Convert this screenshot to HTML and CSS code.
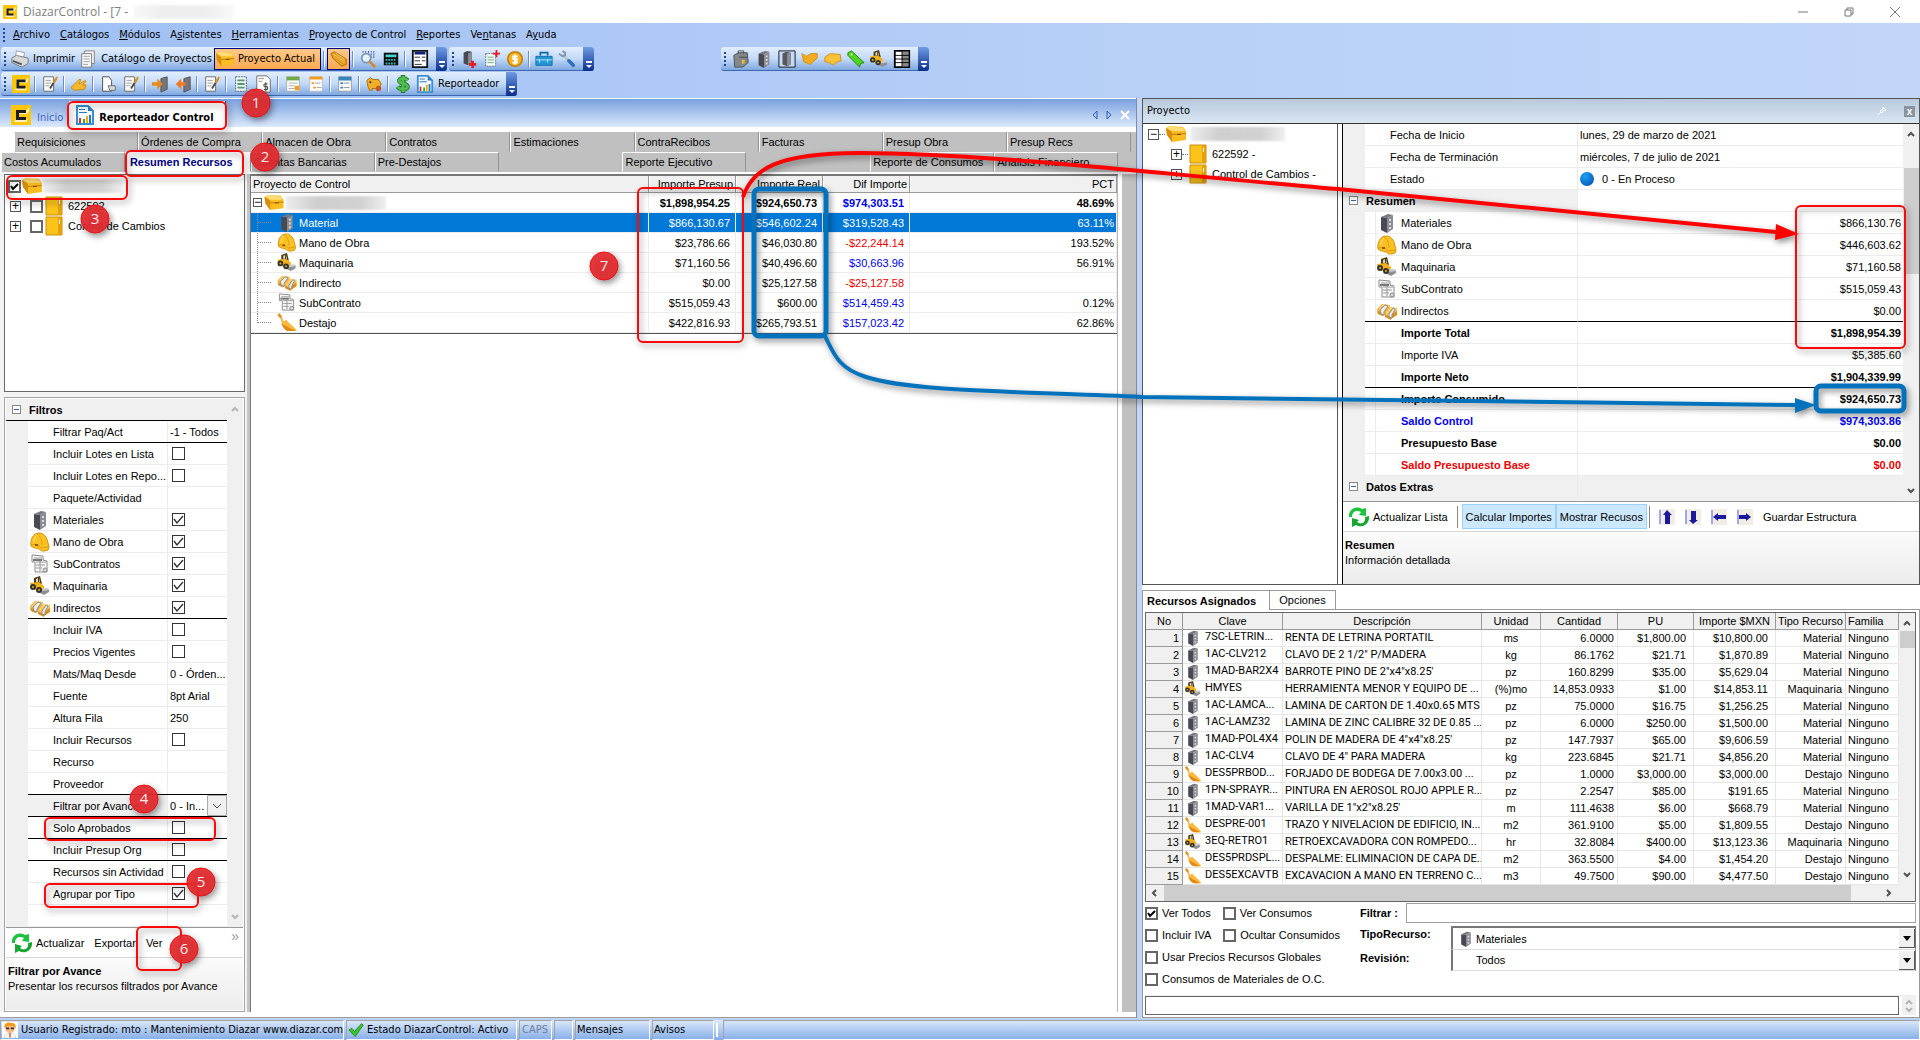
FILE: index.html
```html
<!DOCTYPE html>
<html lang="es">
<head>
<meta charset="utf-8">
<title>DiazarControl</title>
<link rel="stylesheet" href="styles.css">
</head>
<body>
<svg class="sprite" aria-hidden="true">
<symbol id="logo" viewBox="0 0 20 20"><path fill="#ffc70a" d="M0 0h20v20H0z"/><path fill="#fff" d="M5 5h11l2-3v4l-2 3H5zM5 14h11v3H3z" opacity=".75"/><path fill="#1d1d1b" d="M5 5h10v3H8v4h7v3H5z"/></symbol>
<symbol id="block" viewBox="0 0 20 20"><path fill="#77787f" d="M4 4l7-3 5 1-6 3z"/><path fill="#484952" d="M4 4l6 1v15l-6-3z"/><path fill="#8b8d95" d="M10 5l6-3v14l-6 4z"/><path stroke="#dcdde2" stroke-width="2" d="M13 6v2M13 10v2M13 14v2"/></symbol>
<symbol id="helmet" viewBox="0 0 20 20"><path fill="#fbc123" stroke="#d1920c" d="M1 14C0 8 3 1 9 1c5 0 8 4 9 10l1 4-1 3c-5 2-7 1-9-1-3-1-6-1-8-3z"/><path fill="none" stroke="#e2a013" d="M7 2c4 3 5 7 5 11"/><path fill="none" stroke="#ffe080" d="M4 10c0-3 1-5 3-7"/><path fill="none" stroke="#dd9a10" d="M1 13c4-1 8 0 10 3l7-1"/><path fill="#8f5b05" d="M5 12h3v2H5z"/></symbol>
<symbol id="loader" viewBox="0 0 20 20"><path fill="#4a3b14" d="M4 7V2l6-2 2 8z"/><path fill="#dcd6c2" d="M6 3l2-1v4H6zM9 2l1 4H9z"/><path fill="#f2b01a" d="M0 7l9-1 5 4v4l-4 2-9-4z"/><path fill="#8e9096" d="M12 14l7-1v3l-5 3-4-2z"/><path fill="#c9cbd0" d="M13 12h5l1 2-7 1z"/><circle cx="3" cy="11" r="3" fill="#333"/><circle cx="9" cy="14" r="3" fill="#333"/><circle cx="3" cy="11" r="1" fill="#f2b01a"/><circle cx="9" cy="14" r="1" fill="#f2b01a"/></symbol>
<symbol id="docs" viewBox="0 0 20 20"><path fill="#f8f8f8" stroke="#8b8b8b" d="M2 1l11 1v4l4 1v11H5V8H2z"/><path stroke="#9a9a9a" d="M4 4h8M6 8h10M6 11h9M6 14h6M10 6v11"/><path stroke="#777" stroke-width="2" d="M3 6h9"/><circle cx="15" cy="16" r="2" fill="#ddd" stroke="#888"/></symbol>
<symbol id="money" viewBox="0 0 20 20"><path fill="#f5b53a" d="M0 8l5-5 8 1-1 7-6 4-5-2z"/><path fill="#d98f17" d="M0 10l6 2v3l-5-2zM8 13l6 3v3l-6-3z"/><path fill="#f9bf47" d="M8 12l5-6 7 1v6l-6 4z"/><path fill="#d98f17" d="M14 14l6-4v4l-6 4z"/><path stroke="#ffe3a1" d="M2 8l4-4 6 1M10 12l4-5 5 1" fill="none"/><path fill="#ececec" stroke="#8c8c8c" d="M3 9l5-5 3 1-4 6v3l-3-1zM12 13l4-6 2 1-3 6v3l-3-1z"/></symbol>
<symbol id="trowel" viewBox="0 0 20 20"><path fill="none" stroke="#e0962a" stroke-width="3" d="M1 1l3 4"/><path fill="none" stroke="#f3b34c" stroke-width="2" d="M4 5l1 4 3 1"/><path fill="#ffb938" d="M4 11l5-4c3 4 7 6 11 11v1h-8c-4 0-6-4-8-8z"/><path fill="#e08a18" d="M4 11l15 8h-7c-4 0-6-4-8-8z"/></symbol>
<symbol id="box" viewBox="0 0 20 20"><path fill="#f9bd22" d="M0 4l4-2 13 1 3 4v9l-14 2-5-7z"/><path fill="#ffdc78" d="M1 4l4-2 12 2 2 3H6z"/><path fill="#d68e0c" d="M0 4l6 4v10l-5-7z"/><path fill="#c07c08" d="M6 10l14-1v1L6 11z"/><path fill="#7c4f03" d="M11 10h4v1h-4z"/></symbol>
<symbol id="door" viewBox="0 0 18 20"><path fill="#fcc41a" stroke="#c98e0b" d="M1 1h16v18H1z"/><path fill="#e4a10c" d="M13 1h4v18h-4z"/><path fill="#fff" d="M14 4h1v4h-1z"/></symbol>
<symbol id="refresh" viewBox="0 0 20 20"><path fill="#1fc23f" d="M0 10C-1 3 6-2 13 2l4-1v8l-7-1 2-3C8 3 3 4 3 10z"/><path fill="#16a733" d="M20 9c1 7-6 13-13 9l-4 2v-9l7 2-2 2c4 3 9 1 8-5z"/></symbol>
<symbol id="report" viewBox="0 0 20 20"><path fill="#f4faff" stroke="#3a8fd0" stroke-width="2" d="M2 1h11l5 5v13H2z"/><path fill="#2e7bc4" d="M13 1l5 5h-5zM4 4h6v1H4zM4 7h8v1H4z"/><path fill="#d33" d="M4 13h2v5H4z"/><path fill="#3a3" d="M8 14h2v4H8z"/><path fill="#fa0" d="M11 11h2v7h-2z"/><path fill="#27c" d="M14 10h2v8h-2z"/></symbol>
<symbol id="printer" viewBox="0 0 20 20"><path fill="#fff" stroke="#999" d="M6 1l9 2-1 6-9-2z"/><path fill="#d9d9d9" stroke="#777" d="M1 9l5-3 13 3v6l-7 4-11-5z"/><path stroke="#555" stroke-width="2" d="M2 12l10 4"/></symbol>
<symbol id="page" viewBox="0 0 20 20"><path fill="#fafafa" stroke="#777" d="M6 1h11v14H6z"/><path fill="#fafafa" stroke="#777" d="M3 4h11v15H3z"/><path stroke="#8e9aa8" stroke-width="1" d="M5 7h7M5 10h7M5 13h7M5 16h5"/></symbol>
<symbol id="pagepen" viewBox="0 0 20 20"><path fill="#fafafa" stroke="#666" d="M3 2h11v16H3z"/><path stroke="#999" d="M5 6h6M5 9h6M5 12h4"/><path stroke="#444" stroke-width="2" d="M17 4l-7 11"/><path stroke="#e59a17" stroke-width="2" d="M18 2l-4 7"/></symbol>
<symbol id="pageout" viewBox="0 0 20 20"><path fill="#fff" stroke="#444" d="M4 2h7l3 4v12H4z"/><path fill="#ddd" stroke="#666" d="M10 12h8v5h-6z"/></symbol>
<symbol id="pagegreen" viewBox="0 0 20 20"><path fill="#eafaf0" stroke="#557" stroke-dasharray="2 1" d="M4 2h12v16H4z"/><path stroke="#5a8f78" stroke-width="2" d="M6 6h8M6 10h8M6 14h8"/></symbol>
<symbol id="pagedollar" viewBox="0 0 20 20"><path fill="#fff" stroke="#666" d="M2 1h11l4 4v14H2z"/><path stroke="#888" d="M4 4h6M4 7h4"/><path fill="none" stroke="#333" d="M14 10h-4v3h4v3h-4M12 8v10"/></symbol>
<symbol id="listg" viewBox="0 0 20 20"><path fill="#fff" stroke="#aaa" d="M3 2h14v16H3z"/><path fill="#6eaa43" d="M3 2h14v4H3z"/><path stroke="#aaa" d="M5 9h10M5 12h7M5 15h7"/><path fill="#f0a018" d="M12 12h5v5h-5z"/></symbol>
<symbol id="listo" viewBox="0 0 20 20"><path fill="#fff" stroke="#bbb" d="M3 2h14v16H3z"/><path fill="#f39b1d" d="M3 2h14v3H3zM5 8h3v2H5zM7 13h3v2H7z"/><path stroke="#999" d="M9 9h6M11 14h5"/></symbol>
<symbol id="listb" viewBox="0 0 20 20"><path fill="#fff" stroke="#999" d="M3 2h14v16H3z"/><path fill="#3684ba" d="M3 2h14v4H3zM5 8h3v2H5zM5 13h3v2H5z"/><path stroke="#888" d="M9 9h6M9 14h6"/></symbol>
<symbol id="hand" viewBox="0 0 20 20"><path fill="#f5b82e" stroke="#c78510" d="M1 14l4-4 5-5 2 0-2 5 7-4 1 1-4 4 4 0-2 5-11 1z"/></symbol>
<symbol id="blockin" viewBox="0 0 20 20"><path fill="#74757d" stroke="#555" d="M11 4l7-2v14l-7 3z"/><path fill="#e98a1c" d="M1 8h6V4l6 6-6 6v-4H1z"/></symbol>
<symbol id="blockout" viewBox="0 0 20 20"><path fill="#74757d" stroke="#555" d="M11 4l7-2v14l-7 3z"/><path fill="#ee7b22" d="M13 8H8V4l-6 6 6 6v-4h5z"/></symbol>
<symbol id="pig" viewBox="0 0 20 20"><path fill="#f0ad25" stroke="#a96e08" d="M2 6l4-3 3 2h6l3 5-2 4v3h-3l-1-2H8v2H5l-2-5z"/><circle cx="15" cy="15" r="3" fill="#c75428"/><path fill="#333" d="M5 7h2v2H5z"/></symbol>
<symbol id="dollar" viewBox="0 0 20 20"><path fill="none" stroke="#237b2a" stroke-width="5" d="M15 6C13 3 5 3 6 7c1 3 9 2 9 6 0 3-8 4-11 0M10 0v20"/><path fill="none" stroke="#52bd51" stroke-width="3" d="M15 6C13 3 5 3 6 7c1 3 9 2 9 6 0 3-8 4-11 0M10 1v18"/></symbol>
<symbol id="search" viewBox="0 0 20 20"><path stroke="#3344aa" stroke-width="2" stroke-dasharray="1 2" d="M4 2h14M7 5h11M10 8h9"/><circle cx="8" cy="9" r="5" fill="#e2f1fb" stroke="#7e99ae" stroke-width="2"/><path stroke="#d7872d" stroke-width="3" d="M12 13l6 6"/></symbol>
<symbol id="calc" viewBox="0 0 20 20"><path fill="#0a0a0a" d="M2 3h16v14H2z"/><path fill="#3ed4cf" d="M4 5h12v3H4z"/><path stroke="#2bbab5" stroke-width="2" stroke-dasharray="2 1" d="M4 11h12M4 15h12"/></symbol>
<symbol id="form" viewBox="0 0 20 20"><path fill="#fff" stroke="#111" stroke-width="2" d="M2 1h16v18H2z"/><path fill="#11207a" d="M4 2h12v3H4z"/><path stroke="#222" stroke-width="1" d="M4 8h6M12 8h4M4 12h6M12 12h4M4 16h8"/></symbol>
<symbol id="blockplus" viewBox="0 0 20 20"><path fill="#484952" d="M4 3l4-2 5 1v13l-4 2-5-2z"/><path fill="#8b8d95" d="M9 4l4-2v13l-4 2z"/><path stroke="#e51b23" stroke-width="3" d="M14 12v8M10 16h8"/></symbol>
<symbol id="listplus" viewBox="0 0 20 20"><path fill="#effcf3" stroke="#668" stroke-dasharray="2 1" d="M3 4h11v14H3z"/><path stroke="#6b9a83" d="M5 8h7M5 11h7M5 14h7"/><path stroke="#e51b23" stroke-width="2" d="M15 0v8M11 4h8"/></symbol>
<symbol id="coin" viewBox="0 0 20 20"><circle cx="10" cy="10" r="8" fill="#f7b421" stroke="#c8830d" stroke-width="2"/><path fill="none" stroke="#fff" stroke-width="2" d="M13 7H8v3h4v4H7M10 5v11"/></symbol>
<symbol id="case" viewBox="0 0 20 20"><path fill="#2498d5" stroke="#0b6aa5" d="M1 7h18v10H1z"/><path fill="none" stroke="#0b6aa5" stroke-width="2" d="M6 6V3h8v3"/><path stroke="#bde7fb" d="M1 11h18M5 10v4M14 10v4"/></symbol>
<symbol id="wrench" viewBox="0 0 20 20"><path stroke="#b9c8d8" stroke-width="3" d="M5 5l6 6"/><path fill="none" stroke="#8093a8" stroke-width="2" d="M1 4l4 3 3-1V3L5 1"/><path stroke="#2f6fc2" stroke-width="4" stroke-linecap="round" d="M12 12l5 5"/></symbol>
<symbol id="bag" viewBox="0 0 20 20"><path fill="#85888a" stroke="#4c4e50" d="M2 6l5-3h10l1 11-6 5H3z"/><path fill="none" stroke="#444" d="M7 4V1h6v3M8 8h9"/><path fill="#f4bd26" d="M11 11h3v4h-3z"/></symbol>
<symbol id="blockbox" viewBox="0 0 20 20"><path fill="#c3d9f7" stroke="#111" stroke-width="1" d="M1 1h18v18H1z"/><path fill="#55565e" d="M5 4l4-2 5 1v13l-4 2-5-2z"/><path fill="#898b93" d="M10 4l4-1v13l-4 2z"/></symbol>
<symbol id="shake" viewBox="0 0 20 20"><path fill="#f3ac20" stroke="#d48b10" d="M1 4l5 3 5-3 7 0v5l-8 7-7-3z"/></symbol>
<symbol id="stack" viewBox="0 0 20 20"><path fill="#fbc239" stroke="#d28c0d" d="M1 8l6-4 11 1 1 7-6 2-3 3-4-3-5-1z"/></symbol>
<symbol id="bars" viewBox="0 0 20 20"><path fill="#e6a023" stroke="#a8690b" d="M1 4l4-2 13 8 0 6-5 2L3 9z"/><path stroke="#ffd680" d="M4 5l12 8M7 4l9 6" stroke-dasharray="3 1"/></symbol>
<symbol id="tag" viewBox="0 0 20 20"><path fill="#4fd51f" stroke="#1f7f0d" d="M1 3l4-2 14 13-4 1-1 4L1 6z"/><circle cx="5" cy="5" r="1" fill="#fff"/></symbol>
<symbol id="tbl" viewBox="0 0 20 20"><path fill="#fff" stroke="#000" stroke-width="2" d="M2 1h16v18H2z"/><path fill="#888" d="M10 2h7v16h-7z"/><path stroke="#000" d="M2 6h16M2 10h16M2 14h16M10 1v18"/></symbol>
<symbol id="user" viewBox="0 0 20 20"><path fill="#fff" d="M0 0h20v20H0z"/><circle cx="10" cy="8" r="6" fill="#f8b98a"/><path fill="#f59a16" d="M3 8C2 1 8 0 10 1c6-1 8 3 7 7l-3-3H6z"/><path fill="#333" d="M5 7h4v2H5zM11 7h4v2h-4z"/><path fill="#fff" stroke="#ccc" d="M3 20c0-8 14-8 14 0z"/><path fill="#e65c12" d="M9 14h2v5H9z"/></symbol>
<symbol id="check" viewBox="0 0 20 20"><path fill="#3cc42c" stroke="#18820f" d="M1 10l4-2 3 4L17 2l2 2L9 18z"/></symbol>
<symbol id="au" viewBox="0 0 16 16"><path fill="#f1ede5" d="M0 0h16v16H0z"/><path stroke="#5560f0" d="M1 1v14"/><path fill="#1b189c" d="M8 1l5 5h-2v9H6V6H4z"/></symbol>
<symbol id="ad" viewBox="0 0 16 16"><path fill="#f1ede5" d="M0 0h16v16H0z"/><path stroke="#5560f0" d="M1 1v14"/><path fill="#1b189c" d="M8 15l5-4h-2V2H6v9H4z"/></symbol>
<symbol id="al" viewBox="0 0 16 16"><path fill="#f1ede5" d="M0 0h16v16H0z"/><path stroke="#5560f0" d="M1 1v14"/><path fill="#1b189c" d="M2 8l5-4v2h8v4H7v2z"/></symbol>
<symbol id="ar" viewBox="0 0 16 16"><path fill="#f1ede5" d="M0 0h16v16H0z"/><path stroke="#5560f0" d="M1 1v14"/><path fill="#1b189c" d="M14 8l-5-4v2H2v4h7v2z"/></symbol>
<symbol id="up" viewBox="0 0 8 8"><path fill="none" stroke="currentColor" stroke-width="2" d="M1 6l3-3 3 3"/></symbol>
<symbol id="dn" viewBox="0 0 8 8"><path fill="none" stroke="currentColor" stroke-width="2" d="M1 2l3 3 3-3"/></symbol>
<symbol id="lt" viewBox="0 0 8 8"><path fill="none" stroke="currentColor" stroke-width="2" d="M6 1L3 4l3 3"/></symbol>
<symbol id="rt" viewBox="0 0 8 8"><path fill="none" stroke="currentColor" stroke-width="2" d="M2 1l3 3-3 3"/></symbol>
<symbol id="cap" viewBox="0 0 8 8"><path stroke="#fff" stroke-width="2" d="M1 1h6"/><path fill="#fff" d="M1 4h6L4 7z"/></symbol>
</svg>

<header class="titlebar">
  <svg class="i14"><use href="#logo"/></svg>
  <span>DiazarControl - [7 -</span><span class="smudge title-smudge"></span>
  <span class="winbtns"><button aria-label="Minimizar"><svg viewBox="0 0 10 10"><path d="M0 5h10"/></svg></button><button aria-label="Restaurar"><svg viewBox="0 0 10 10"><path d="M1 3h6v6H1zM3 3V1h6v6H7"/></svg></button><button aria-label="Cerrar"><svg viewBox="0 0 10 10"><path d="M0 0l10 10M10 0L0 10"/></svg></button></span>
</header>

<div class="bars">
  <nav class="menu"><i class="grip"></i><button><u>A</u>rchivo</button><button><u>C</u>atálogos</button><button><u>M</u>ódulos</button><button>A<u>s</u>istentes</button><button><u>H</u>erramientas</button><button><u>P</u>royecto de Control</button><button><u>R</u>eportes</button><button>Ve<u>n</u>tanas</button><button>A<u>y</u>uda</button></nav>
  <div class="tbrow">
    <div class="tb"><i class="grip"></i><button><svg><use href="#printer"/></svg>Imprimir</button><button><svg><use href="#page"/></svg>Catálogo de Proyectos</button><button class="on"><svg><use href="#box"/></svg>Proyecto Actual</button><i class="sep"></i><button class="on" aria-label="Recursos"><svg><use href="#bars"/></svg></button><i class="sep"></i><button aria-label="Buscar"><svg><use href="#search"/></svg></button><button aria-label="Calculadora"><svg><use href="#calc"/></svg></button><i class="sep"></i><button aria-label="Formulario"><svg><use href="#form"/></svg></button><i class="cap"><svg><use href="#cap"/></svg></i></div>
    <div class="tb"><i class="grip"></i><button aria-label="Agregar material"><svg><use href="#blockplus"/></svg></button><button aria-label="Agregar lista"><svg><use href="#listplus"/></svg></button><button aria-label="Moneda"><svg><use href="#coin"/></svg></button><i class="sep"></i><button aria-label="Maletín"><svg><use href="#case"/></svg></button><button aria-label="Opciones"><svg><use href="#wrench"/></svg></button><i class="cap"><svg><use href="#cap"/></svg></i></div>
    <div class="tb third"><i class="grip"></i><button aria-label="Portafolio"><svg><use href="#bag"/></svg></button><button aria-label="Material"><svg><use href="#block"/></svg></button><button aria-label="Material marcado"><svg><use href="#blockbox"/></svg></button><button aria-label="Acuerdos"><svg><use href="#shake"/></svg></button><button aria-label="Costos"><svg><use href="#stack"/></svg></button><button aria-label="Etiqueta"><svg><use href="#tag"/></svg></button><button aria-label="Maquinaria"><svg><use href="#loader"/></svg></button><button aria-label="Tabla"><svg><use href="#tbl"/></svg></button><i class="cap"><svg><use href="#cap"/></svg></i></div>
  </div>
  <div class="tbrow">
    <div class="tb"><i class="grip"></i><button aria-label="Inicio"><svg><use href="#logo"/></svg></button><i class="sep"></i><button aria-label="Editar"><svg><use href="#pagepen"/></svg></button><i class="sep"></i><button aria-label="Mano"><svg><use href="#hand"/></svg></button><i class="sep"></i><button aria-label="Requisición"><svg><use href="#pageout"/></svg></button><button aria-label="Orden"><svg><use href="#pagepen"/></svg></button><i class="sep"></i><button aria-label="Entrada"><svg><use href="#blockin"/></svg></button><button aria-label="Salida"><svg><use href="#blockout"/></svg></button><i class="sep"></i><button aria-label="Contrato"><svg><use href="#pagepen"/></svg></button><i class="sep"></i><button aria-label="Estimación"><svg><use href="#pagegreen"/></svg></button><button aria-label="Factura"><svg><use href="#pagedollar"/></svg></button><i class="sep"></i><button aria-label="Lista verde"><svg><use href="#listg"/></svg></button><button aria-label="Lista naranja"><svg><use href="#listo"/></svg></button><i class="sep"></i><button aria-label="Lista azul"><svg><use href="#listb"/></svg></button><i class="sep"></i><button aria-label="Ahorro"><svg><use href="#pig"/></svg></button><i class="sep"></i><button aria-label="Pagos"><svg><use href="#dollar"/></svg></button><button><svg><use href="#report"/></svg>Reporteador</button><i class="cap"><svg><use href="#cap"/></svg></i></div>
  </div>
</div>

<main class="work">
  <section class="doc">
    <div class="doctabs"><svg class="i20"><use href="#logo"/></svg><button>Inicio</button><button class="cur"><svg class="i20"><use href="#report"/></svg>Reporteador Control</button><span class="docnav"><svg viewBox="0 0 6 10"><path d="M5 1v8L1 5z"/></svg><svg viewBox="0 0 6 10"><path d="M1 1v8l4-4z"/></svg><svg class="x" viewBox="0 0 10 10"><path d="M1 1l8 8M9 1L1 9"/></svg></span></div>
    <div class="tabs t1"><button>Requisiciones</button><button>Órdenes de Compra</button><button>Almacen de Obra</button><button>Contratos</button><button>Estimaciones</button><button>ContraRecibos</button><button>Facturas</button><button>Presup Obra</button><button>Presup Recs</button></div>
    <div class="tabs t2"><button>Costos Acumulados</button><button class="cur">Resumen Recursos</button><button>Cuentas Bancarias</button><button>Pre-Destajos</button><i></i><button>Reporte Ejecutivo</button><i></i><button>Reporte de Consumos</button><button>Analisis Financiero</button></div>
    <div class="docbody">
      <aside class="side">
        <div class="tree">
          <label><input type="checkbox" class="classic" checked><svg class="i20"><use href="#box"/></svg><span class="smudge s80"></span></label>
          <div class="node"><b class="pm">+</b><label><input type="checkbox" class="classic"><svg class="door"><use href="#door"/></svg>622592</label></div>
          <div class="node"><b class="pm">+</b><label><input type="checkbox" class="classic"><svg class="door"><use href="#door"/></svg>Control de Cambios</label></div>
        </div>
        <div class="filters">
          <div class="pgwrap">
            <div class="pg">
              <h2><b class="mn"></b>Filtros</h2>
              <div class="r k"><span></span><em>Filtrar Paq/Act</em><p>-1 - Todos</p></div>
              <label class="r"><span></span><em>Incluir Lotes en Lista</em><p><input type="checkbox"></p></label>
              <label class="r"><span></span><em>Incluir Lotes en Repo...</em><p><input type="checkbox"></p></label>
              <div class="r"><span></span><em>Paquete/Actividad</em><p></p></div>
              <label class="r"><span><svg><use href="#block"/></svg></span><em>Materiales</em><p><input type="checkbox" checked></p></label>
              <label class="r"><span><svg><use href="#helmet"/></svg></span><em>Mano de Obra</em><p><input type="checkbox" checked></p></label>
              <label class="r"><span><svg><use href="#docs"/></svg></span><em>SubContratos</em><p><input type="checkbox" checked></p></label>
              <label class="r"><span><svg><use href="#loader"/></svg></span><em>Maquinaria</em><p><input type="checkbox" checked></p></label>
              <label class="r k"><span><svg><use href="#money"/></svg></span><em>Indirectos</em><p><input type="checkbox" checked></p></label>
              <label class="r"><span></span><em>Incluir IVA</em><p><input type="checkbox"></p></label>
              <label class="r"><span></span><em>Precios Vigentes</em><p><input type="checkbox"></p></label>
              <div class="r"><span></span><em>Mats/Maq Desde</em><p>0 - Órden...</p></div>
              <div class="r"><span></span><em>Fuente</em><p>8pt Arial</p></div>
              <div class="r"><span></span><em>Altura Fila</em><p>250</p></div>
              <label class="r"><span></span><em>Incluir Recursos</em><p><input type="checkbox"></p></label>
              <div class="r"><span></span><em>Recurso</em><p></p></div>
              <div class="r k"><span></span><em>Proveedor</em><p></p></div>
              <label class="r k sel"><span></span><em>Filtrar por Avance</em><p><select><option>0 - In...</option></select></p></label>
              <label class="r k"><span></span><em>Solo Aprobados</em><p><input type="checkbox"></p></label>
              <label class="r k"><span></span><em>Incluir Presup Org</em><p><input type="checkbox"></p></label>
              <label class="r"><span></span><em>Recursos sin Actividad</em><p><input type="checkbox"></p></label>
              <label class="r"><span></span><em>Agrupar por Tipo</em><p><input type="checkbox" checked></p></label>
              <div class="r"><span></span><em></em><p></p></div>
            </div>
            <div class="vs dim"><svg><use href="#up"/></svg><svg><use href="#dn"/></svg></div>
          </div>
          <div class="pgtools"><button><svg class="i20"><use href="#refresh"/></svg>Actualizar</button><button>Exportar</button><button>Ver</button><i class="more">»</i></div>
          <div class="desc"><b>Filtrar por Avance</b>Presentar los recursos filtrados por Avance</div>
        </div>
      </aside>
      <div class="sheet">
        <table class="res">
          <colgroup><col><col class="c87"><col class="c87"><col class="c87"><col class="c207"></colgroup>
          <thead><tr><th>Proyecto de Control</th><th>Importe Presup</th><th>Importe Real</th><th>Dif Importe</th><th>PCT</th></tr></thead>
          <tbody>
            <tr class="tot"><td><div class="cell"><b class="pm sm">−</b><svg class="i20"><use href="#box"/></svg><span class="smudge s100"></span></div></td><td>$1,898,954.25</td><td>$924,650.73</td><td class="blue">$974,303.51</td><td>48.69%</td></tr>
            <tr class="hl"><td><div class="cell"><i class="cn"></i><svg class="i20"><use href="#block"/></svg>Material</div></td><td>$866,130.67</td><td>$546,602.24</td><td>$319,528.43</td><td>63.11%</td></tr>
            <tr><td><div class="cell"><i class="cn"></i><svg class="i20"><use href="#helmet"/></svg>Mano de Obra</div></td><td>$23,786.66</td><td>$46,030.80</td><td class="red">-$22,244.14</td><td>193.52%</td></tr>
            <tr><td><div class="cell"><i class="cn"></i><svg class="i20"><use href="#loader"/></svg>Maquinaria</div></td><td>$71,160.56</td><td>$40,496.60</td><td class="blue">$30,663.96</td><td>56.91%</td></tr>
            <tr><td><div class="cell"><i class="cn"></i><svg class="i20"><use href="#money"/></svg>Indirecto</div></td><td>$0.00</td><td>$25,127.58</td><td class="red">-$25,127.58</td><td></td></tr>
            <tr><td><div class="cell"><i class="cn"></i><svg class="i20"><use href="#docs"/></svg>SubContrato</div></td><td>$515,059.43</td><td>$600.00</td><td class="blue">$514,459.43</td><td>0.12%</td></tr>
            <tr><td><div class="cell"><i class="cn last"></i><svg class="i20"><use href="#trowel"/></svg>Destajo</div></td><td>$422,816.93</td><td>$265,793.51</td><td class="blue">$157,023.42</td><td>62.86%</td></tr>
          </tbody>
        </table>
      </div>
      <div class="edge"></div>
    </div>
  </section>

  <section class="right">
    <div class="dock">
      <h2 class="dockhead">Proyecto<span><svg viewBox="0 0 10 10"><path d="M6 1l3 3-2 0-2 3-2-2 3-2zM4 6L1 9"/></svg><button aria-label="Cerrar panel">x</button></span></h2>
      <div class="dockbody">
        <div class="ptree">
          <div class="root"><b class="pm">−</b><i class="dots"></i><svg class="i20"><use href="#box"/></svg><span class="smudge s94"></span></div>
          <div class="kid"><b class="pm">+</b><i class="dots"></i><svg class="door"><use href="#door"/></svg>622592 -</div>
          <div class="kid"><b class="pm">+</b><i class="dots"></i><svg class="door"><use href="#door"/></svg>Control de Cambios -</div>
        </div>
        <div class="props">
          <div class="pgwrap">
            <div class="pg2">
              <div class="q top"><em>Fecha de Inicio</em><p>lunes, 29 de marzo de 2021</p></div>
              <div class="q top"><em>Fecha de Terminación</em><p>miércoles, 7 de julio de 2021</p></div>
              <div class="q top"><em>Estado</em><p><i class="ball"></i>0 - En Proceso</p></div>
              <div class="q sec open"><em><b class="mn"></b>Resumen</em><p></p></div>
              <div class="q"><em><svg><use href="#block"/></svg>Materiales</em><p>$866,130.76</p></div>
              <div class="q"><em><svg><use href="#helmet"/></svg>Mano de Obra</em><p>$446,603.62</p></div>
              <div class="q"><em><svg><use href="#loader"/></svg>Maquinaria</em><p>$71,160.58</p></div>
              <div class="q"><em><svg><use href="#docs"/></svg>SubContrato</em><p>$515,059.43</p></div>
              <div class="q k"><em><svg><use href="#money"/></svg>Indirectos</em><p>$0.00</p></div>
              <div class="q bold"><em>Importe Total</em><p>$1,898,954.39</p></div>
              <div class="q"><em>Importe IVA</em><p>$5,385.60</p></div>
              <div class="q bold k"><em>Importe Neto</em><p>$1,904,339.99</p></div>
              <div class="q bold"><em>Importe Consumido</em><p>$924,650.73</p></div>
              <div class="q bold blue"><em>Saldo Control</em><p>$974,303.86</p></div>
              <div class="q bold"><em>Presupuesto Base</em><p>$0.00</p></div>
              <div class="q bold red"><em>Saldo Presupuesto Base</em><p>$0.00</p></div>
              <div class="q sec"><em><b class="mn"></b>Datos Extras</em><p></p></div>
            </div>
            <div class="vs"><svg><use href="#up"/></svg><i class="thumb"></i><svg><use href="#dn"/></svg></div>
          </div>
          <div class="pgtools wide"><button><svg class="i20"><use href="#refresh"/></svg>Actualizar Lista</button><i class="bar"></i><button class="tog">Calcular Importes</button><button class="tog">Mostrar Recusos</button><i class="bar"></i><button class="arr" aria-label="Subir"><svg><use href="#au"/></svg></button><button class="arr" aria-label="Bajar"><svg><use href="#ad"/></svg></button><button class="arr" aria-label="Izquierda"><svg><use href="#al"/></svg></button><button class="arr" aria-label="Derecha"><svg><use href="#ar"/></svg></button><button class="save">Guardar Estructura</button></div>
          <div class="desc"><b>Resumen</b>Información detallada</div>
        </div>
      </div>
    </div>

    <div class="subtabs"><button class="cur">Recursos Asignados</button><button>Opciones</button><i></i></div>
    <div class="lower">
      <div class="gridbox">
        <div class="gridtop">
          <table class="rec">
            <colgroup><col class="w37"><col class="w100"><col><col class="w59"><col class="w77"><col class="w76"><col class="w82"><col class="w70"><col class="w53"></colgroup>
            <thead><tr><th>No</th><th>Clave</th><th>Descripción</th><th>Unidad</th><th>Cantidad</th><th>PU</th><th>Importe $MXN</th><th>Tipo Recurso</th><th>Familia</th></tr></thead>
            <tbody>
              <tr><td>1</td><td><svg><use href="#block"/></svg>7SC-LETRIN...</td><td>RENTA DE LETRINA PORTATIL</td><td>ms</td><td>6.0000</td><td>$1,800.00</td><td>$10,800.00</td><td>Material</td><td>Ninguno</td></tr>
              <tr><td>2</td><td><svg><use href="#block"/></svg>1AC-CLV212</td><td>CLAVO DE 2 1/2" P/MADERA</td><td>kg</td><td>86.1762</td><td>$21.71</td><td>$1,870.89</td><td>Material</td><td>Ninguno</td></tr>
              <tr><td>3</td><td><svg><use href="#block"/></svg>1MAD-BAR2X4</td><td>BARROTE PINO DE 2"x4"x8.25'</td><td>pz</td><td>160.8299</td><td>$35.00</td><td>$5,629.04</td><td>Material</td><td>Ninguno</td></tr>
              <tr><td>4</td><td><svg><use href="#loader"/></svg>HMYES</td><td>HERRAMIENTA MENOR Y EQUIPO DE ...</td><td>(%)mo</td><td>14,853.0933</td><td>$1.00</td><td>$14,853.11</td><td>Maquinaria</td><td>Ninguno</td></tr>
              <tr><td>5</td><td><svg><use href="#block"/></svg>1AC-LAMCA...</td><td>LAMINA DE CARTON DE 1.40x0.65 MTS</td><td>pz</td><td>75.0000</td><td>$16.75</td><td>$1,256.25</td><td>Material</td><td>Ninguno</td></tr>
              <tr><td>6</td><td><svg><use href="#block"/></svg>1AC-LAMZ32</td><td>LAMINA DE ZINC CALIBRE 32 DE 0.85 ...</td><td>pz</td><td>6.0000</td><td>$250.00</td><td>$1,500.00</td><td>Material</td><td>Ninguno</td></tr>
              <tr><td>7</td><td><svg><use href="#block"/></svg>1MAD-POL4X4</td><td>POLIN DE MADERA DE 4"x4"x8.25'</td><td>pz</td><td>147.7937</td><td>$65.00</td><td>$9,606.59</td><td>Material</td><td>Ninguno</td></tr>
              <tr><td>8</td><td><svg><use href="#block"/></svg>1AC-CLV4</td><td>CLAVO DE 4" PARA MADERA</td><td>kg</td><td>223.6845</td><td>$21.71</td><td>$4,856.20</td><td>Material</td><td>Ninguno</td></tr>
              <tr><td>9</td><td><svg><use href="#trowel"/></svg>DES5PRBOD...</td><td>FORJADO DE BODEGA DE 7.00x3.00 ...</td><td>pz</td><td>1.0000</td><td>$3,000.00</td><td>$3,000.00</td><td>Destajo</td><td>Ninguno</td></tr>
              <tr><td>10</td><td><svg><use href="#block"/></svg>1PN-SPRAYR...</td><td>PINTURA EN AEROSOL ROJO APPLE R...</td><td>pz</td><td>2.2547</td><td>$85.00</td><td>$191.65</td><td>Material</td><td>Ninguno</td></tr>
              <tr><td>11</td><td><svg><use href="#block"/></svg>1MAD-VAR1...</td><td>VARILLA DE 1"x2"x8.25'</td><td>m</td><td>111.4638</td><td>$6.00</td><td>$668.79</td><td>Material</td><td>Ninguno</td></tr>
              <tr><td>12</td><td><svg><use href="#trowel"/></svg>DESPRE-001</td><td>TRAZO Y NIVELACION DE EDIFICIO, IN...</td><td>m2</td><td>361.9100</td><td>$5.00</td><td>$1,809.55</td><td>Destajo</td><td>Ninguno</td></tr>
              <tr><td>13</td><td><svg><use href="#loader"/></svg>3EQ-RETRO1</td><td>RETROEXCAVADORA CON ROMPEDO...</td><td>hr</td><td>32.8084</td><td>$400.00</td><td>$13,123.36</td><td>Maquinaria</td><td>Ninguno</td></tr>
              <tr><td>14</td><td><svg><use href="#trowel"/></svg>DES5PRDSPL...</td><td>DESPALME: ELIMINACION DE CAPA DE...</td><td>m2</td><td>363.5500</td><td>$4.00</td><td>$1,454.20</td><td>Destajo</td><td>Ninguno</td></tr>
              <tr><td>15</td><td><svg><use href="#trowel"/></svg>DES5EXCAVTB</td><td>EXCAVACION A MANO EN TERRENO C...</td><td>m3</td><td>49.7500</td><td>$90.00</td><td>$4,477.50</td><td>Destajo</td><td>Ninguno</td></tr>
            </tbody>
          </table>
          <div class="vs"><svg><use href="#up"/></svg><i class="thumb small"></i><svg><use href="#dn"/></svg></div>
        </div>
        <div class="hs"><svg><use href="#lt"/></svg><i></i><svg><use href="#rt"/></svg></div>
      </div>
      <form class="opts">
        <div class="checks">
          <div><label><input type="checkbox" class="classic" checked>Ver Todos</label><label><input type="checkbox" class="classic">Ver Consumos</label></div>
          <div><label><input type="checkbox" class="classic">Incluir IVA</label><label><input type="checkbox" class="classic">Ocultar Consumidos</label></div>
          <div><label><input type="checkbox" class="classic">Usar Precios Recursos Globales</label></div>
          <div><label><input type="checkbox" class="classic">Consumos de Materiales de O.C.</label></div>
        </div>
        <div class="fields">
          <div class="f1"><label for="filtrar">Filtrar :</label><input id="filtrar" type="text"></div>
          <div class="f2"><label for="tipo">TipoRecurso:</label><span class="combo tall"><svg><use href="#block"/></svg><select id="tipo"><option>Materiales</option></select></span></div>
          <div class="f2"><label for="rev">Revisión:</label><span class="combo"><select id="rev"><option>Todos</option></select></span></div>
        </div>
      </form>
      <div class="note"><textarea aria-label="Notas"></textarea><div class="vs dim"><svg><use href="#up"/></svg><svg><use href="#dn"/></svg></div></div>
    </div>
  </section>
</main>

<footer class="status"><span class="u"><svg><use href="#user"/></svg>Usuario Registrado: mto : Mantenimiento Diazar www.diazar.com</span><span class="e"><svg><use href="#check"/></svg>Estado DiazarControl: Activo</span><span class="caps">CAPS</span><span class="gap"></span><span class="m">Mensajes</span><span class="a">Avisos</span><i></i><span class="rest"></span></footer>

<svg class="notes" viewBox="0 0 1920 1040">
  <g class="shadow">
    <g class="rb"><rect x="68" y="102" width="158" height="27" rx="5"/><rect x="126" y="151" width="117" height="25" rx="5"/><rect x="7" y="176" width="120" height="23" rx="5"/><rect x="45" y="818" width="170" height="22" rx="5"/><rect x="45" y="884" width="153" height="23" rx="5"/><rect x="137" y="927" width="44" height="43" rx="5"/><rect x="638" y="188" width="105" height="154" rx="5"/><rect x="1796" y="206" width="109" height="142" rx="5"/></g>
    <g class="bb"><rect x="754" y="189" width="72" height="147" rx="5"/><rect x="1816" y="386" width="88" height="25" rx="5"/></g>
    <path class="ra" d="M743 197C752 170 775 153 860 153C980 153 1150 173 1338 189L1776 232"/><path class="rf" d="M1776 224l23 10-24 6z"/>
    <path class="ba" d="M825 336C834 354 838 368 866 377C910 391 1000 391 1142 397C1300 401 1500 403 1796 405"/><path class="bf" d="M1795 398l21 7-21 8z"/>
    <g class="dot"><circle cx="256" cy="103" r="14"/><circle cx="265" cy="157" r="14"/><circle cx="95" cy="219" r="14"/><circle cx="144" cy="799" r="14"/><circle cx="201" cy="882" r="14"/><circle cx="184" cy="949" r="14"/><circle cx="604" cy="266" r="14"/></g>
  </g>
  <g class="num"><text x="256" y="108">1</text><text x="265" y="162">2</text><text x="95" y="224">3</text><text x="144" y="804">4</text><text x="201" y="887">5</text><text x="184" y="954">6</text><text x="604" y="271">7</text></g>
</svg>
</body>
</html>
```
FILE: styles.css
```css
* { box-sizing: border-box; }
body { margin: 0; position: relative; min-height: 100vh; display: flex; flex-direction: column; background: #c1d6f9; color: #000; font: 11px/14px "Liberation Sans", Arial, sans-serif; overflow-x: hidden; }
button, input, select, textarea { font: inherit; color: inherit; margin: 0; padding: 0; border: 0; background: none; border-radius: 0; }
button { white-space: nowrap; text-align: left; }
h2, p { margin: 0; font-size: 11px; }
i, em { font-style: normal; }
svg { flex: none; display: block; }
.sprite { position: absolute; width: 0; height: 0; }
.i14 { width: 14px; height: 14px; }
.i20 { width: 20px; height: 20px; }
.door { width: 18px; height: 20px; }
.blue { color: #0000f0; }
.red { color: #f00000; }
.smudge { flex: none; height: 14px; background: linear-gradient(90deg, #ececec, #cfcfcf 30%, #d2d2d2 75%, #efefef); filter: blur(1px); }
.s80 { width: 80px; }
.s94 { width: 94px; }
.s100 { width: 100px; }

/* window frame */
.titlebar { height: 23px; display: flex; align-items: center; gap: 6px; padding-left: 3px; background: #fff; color: #7d7d7d; font: 12px/16px "Open Sans", sans-serif; }
.title-smudge { width: 100px; opacity: .35; }
.winbtns { margin-left: auto; display: flex; gap: 36px; padding-right: 20px; }
.winbtns svg { width: 10px; height: 10px; fill: none; stroke: #777; }
.bars { background: linear-gradient(90deg, #9fbff3, #b8d0f8 60%, #c1d6f9); padding-bottom: 1px; }
.menu { height: 24px; display: flex; align-items: center; gap: 10px; padding-left: 3px; }
.menu, .tb, .dockhead, .status { font-family: "DejaVu Sans Condensed", "DejaVu Sans", sans-serif; }
.grip { flex: none; width: 2px; height: 14px; background: repeating-linear-gradient(#27418d 0 2px, transparent 2px 4px); }
.menu .grip { margin-right: -2px; }
.tbrow { display: flex; gap: 2px; margin-bottom: 1px; height: 24px; padding-left: 1px; }
.tb { display: flex; align-items: center; height: 24px; padding-left: 3px; border-radius: 3px; background: linear-gradient(#e2eefd, #c3daf8 50%, #7fa8e0); border-bottom: 1px solid #3d67ae; }
.third { margin-left: 125px; }
.tb .grip { margin-right: 3px; }
.tb button { display: flex; align-items: center; justify-content: center; gap: 4px; height: 22px; min-width: 23px; padding: 0 2px; }
.tb button svg { width: 18px; height: 18px; }
.tb .on { background: linear-gradient(#ffc98b, #fda94f); border: 1px solid #000080; padding: 0 5px 0 1px; }
.tb .on[aria-label] { padding: 0; }
.sep { flex: none; width: 1px; height: 16px; margin: 0 3px 0 2px; background: #6a8ccb; box-shadow: 1px 0 #fff; }
.cap { width: 11px; height: 24px; margin-left: 5px; display: flex; align-items: flex-end; justify-content: center; padding-bottom: 2px; border-radius: 0 3px 3px 0; background: linear-gradient(#6f9be4, #0a2f88); }
.cap svg { width: 8px; height: 8px; }

.work { flex: 1; display: grid; grid-template-columns: minmax(0, 1fr) 778px; gap: 5px; }

/* document area */
.doc { display: flex; flex-direction: column; min-width: 0; background: #fff; border-right: 1px solid #8a8a8a; }
.doctabs { display: flex; align-items: flex-end; height: 32px; padding: 0 6px 2px 11px; border-top: 1px solid #fff; border-bottom: 3px solid #fff; background: linear-gradient(#79a0de, #dbe9fc); font: 11px/14px "DejaVu Sans Condensed", sans-serif; }
.doctabs > button { padding: 0 6px; color: #3c66bd; }
.doctabs .cur { display: flex; align-items: flex-end; gap: 4px; height: 26px; margin-bottom: -2px; padding: 0 11px 2px 6px; background: #fff; border-right: 1px solid #1f3f88; color: #000; font-weight: bold; }
.docnav { margin-left: auto; display: flex; align-items: center; gap: 8px; height: 20px; }
.docnav svg { width: 6px; height: 10px; fill: none; stroke: #2d5fc0; }
.docnav .x { width: 10px; stroke: #fff; stroke-width: 2; }
.tabs { display: flex; height: 20px; background: #c0c0c0; }
.tabs button, .tabs i { flex: 1 1 0; min-width: 0; padding-left: 2px; border: 1px solid transparent; }
.tabs button { border-color: #fff #929292 transparent #fff; }
.t1 { margin: 2px 0 0 14px; padding-right: 5px; }
.tabs.t1 button { border-top-color: #c0c0c0; }
.t2 { margin-left: 1px; padding-right: 18px; }
.tabs .cur { background: #fff; color: #000080; font-weight: bold; padding-left: 4px; }
.docbody { flex: 1; display: flex; margin-top: 2px; padding-bottom: 5px; border-bottom: 1px solid #9a9a9a; }
.side { flex: none; width: 250px; display: flex; flex-direction: column; gap: 5px; padding: 0 2px 0 4px; border-right: 3px solid #c4c4c4; background: #f3f3f3; }
.tree { flex: 1; min-height: 100px; padding: 1px; background: #fff; border: 1px solid #6a6a6a; }
.tree label, .node { display: flex; align-items: center; height: 20px; }
.tree label { gap: 4px; }
.tree > label { gap: 1px; padding-left: 2px; }
.node { padding-left: 4px; gap: 9px; }
.node label { gap: 2px; }
.node .door { margin-right: 3px; }
.pm { flex: none; width: 11px; height: 11px; border: 1px solid #555; font: 12px/9px "Liberation Sans", sans-serif; text-align: center; background: #fff; color: #000; }
.sm { width: 9px; height: 9px; line-height: 7px; }
input[type=checkbox] { appearance: none; flex: none; width: 13px; height: 13px; border: 1px solid #333; background: #fff no-repeat center; }
input[type=checkbox]:checked { background-image: url("data:image/svg+xml,%3Csvg xmlns='http://www.w3.org/2000/svg' width='11' height='11'%3E%3Cpath d='M1 5l3 4 6-7' fill='none' stroke='%23333' stroke-width='1.4'/%3E%3C/svg%3E"); }
input[type=checkbox].classic { border: 2px solid #666; }
input[type=checkbox].classic:checked { background-image: url("data:image/svg+xml,%3Csvg xmlns='http://www.w3.org/2000/svg' width='9' height='9'%3E%3Cpath d='M1 4l2 3 5-5' fill='none' stroke='%23000' stroke-width='2'/%3E%3C/svg%3E"); }

/* property lists */
.filters { border: 1px solid #a5a5a5; padding: 1px; background: #fff; }
.pgwrap { display: flex; }
.pg { flex: 1; min-width: 0; background: #f0f0f0; }
.pg h2 { display: flex; align-items: center; gap: 8px; height: 22px; padding-left: 6px; border-bottom: 1px solid #000; }
.mn { flex: none; width: 9px; height: 9px; border: 1px solid #888; background: linear-gradient(#3b5fa8, #3b5fa8) center / 5px 1px no-repeat #fff; }
.r { display: grid; grid-template-columns: 25px 114px 1fr; height: 22px; margin-left: 22px; background: #fff; border-bottom: 1px solid #ececec; align-items: center; }
.r svg { width: 20px; height: 20px; margin-left: 2px; }
.r p { height: 21px; display: flex; align-items: center; padding-left: 2px; border-left: 1px solid #ececec; white-space: nowrap; }
.r em { white-space: nowrap; }
.r input[type=checkbox] { margin-left: 2px; }
.k { border-bottom-color: #000; }
.sel { background: #f0f0f0; }
.sel p { background: #fff; }
.sel select { appearance: none; width: 100%; height: 21px; background: url("data:image/svg+xml,%3Csvg xmlns='http://www.w3.org/2000/svg' width='20' height='21'%3E%3Cpath d='M.5.5h19v20H.5z' fill='%23f0f0f0' stroke='%23aaa'/%3E%3Cpath d='M6 9l4 4 4-4' fill='none' stroke='%23444'/%3E%3C/svg%3E") right no-repeat; }
.vs { flex: none; width: 16px; display: flex; flex-direction: column; align-items: center; justify-content: space-between; padding: 6px 0; background: #f0f0f0; color: #505050; }
.vs svg { width: 8px; height: 8px; }
.dim { color: #b5b5b5; }
.pgtools { display: flex; align-items: center; gap: 10px; height: 31px; padding-left: 6px; border-top: 1px solid #999; border-bottom: 1px solid #d6d6d6; background: #fff; }
.pgtools button { display: flex; align-items: center; gap: 4px; }
.more { margin: -14px 4px 0 auto; color: #999; font-size: 14px; }
.desc { height: 52px; padding: 6px 2px; background: linear-gradient(#fbfbfb, #ececec); display: flex; flex-direction: column; line-height: 15px; }

.sheet { flex: 1; min-width: 0; border: 1px solid #777; border-width: 2px 1px 0 1px; border-color: #777 #b5b5b5 #777 #777; background: #fff; }
.edge { width: 18px; background: linear-gradient(90deg, #fff 4px, #c0c0c0 4px); }
table { border-collapse: separate; border-spacing: 0; table-layout: fixed; width: 100%; }
th { font-weight: normal; }
.res { border-bottom: 1px solid #555; }
.c87 { width: 87px; }
.c207 { width: 207px; }
.res th, .res td { height: 20px; padding: 0 5px 0 0; text-align: right; border-right: 1px solid #ececec; border-bottom: 1px solid #ececec; }
.res th { height: 17px; line-height: 14px; padding: 0 2px; background: #f0f0f0; border-color: #999; box-shadow: inset 1px 0 #fff; }
.res th:first-child { text-align: left; padding-left: 2px; }
.res td:first-child { text-align: left; padding: 0; }
.res td:last-child, .res th:last-child { padding-right: 2px; }
.tot { font-weight: bold; }
.cell { display: flex; align-items: center; gap: 2px; height: 19px; padding-left: 2px; }
.cell .i20 { height: 19px; }
.cn { position: relative; flex: none; width: 18px; height: 19px; margin-left: 4px; border-left: 1px dotted #888; }
.cn::after { content: ""; position: absolute; left: 0; top: 9px; width: 13px; border-top: 1px dotted #888; }
.cn.last { height: 10px; align-self: flex-start; }
.hl td { background: #0078d7; color: #fff; }

/* project panel */
.right { display: flex; flex-direction: column; background: #fff; }
.dock { border: 1px solid #555; }
.dockhead { display: flex; align-items: center; height: 25px; padding: 0 4px; font-weight: normal; background: linear-gradient(#b7c9dc, #d9e6f3); border-bottom: 1px solid #333; }
.dockhead span { margin-left: auto; display: flex; align-items: center; gap: 17px; }
.dockhead svg { width: 10px; height: 10px; fill: none; stroke: #fff; }
.dockhead button { width: 11px; height: 11px; background: #8a949e; color: #fff; font: bold 10px/9px "Liberation Sans", sans-serif; text-align: center; }
.dockbody { display: grid; grid-template-columns: 195px minmax(0, 1fr); gap: 4px; }
.ptree { border-right: 1px solid #555; }
.root, .kid { display: flex; align-items: center; height: 20px; padding-left: 5px; }
.kid { padding-left: 28px; }
.kid .door { margin-right: 5px; }
.root .smudge { margin-left: 5px; }
.dots { width: 6px; border-top: 1px dotted #777; margin-right: 1px; }
.props { border-left: 1px solid #000; }
.pg2 { flex: 1; min-width: 0; padding-bottom: 3px; background: #f0f0f0; }
.q { display: grid; grid-template-columns: 212px minmax(0, 1fr); height: 22px; margin-left: 22px; background: linear-gradient(90deg, #fff 10px, #ececec 10px 11px, #fff 11px); }
.q em, .q p { display: flex; align-items: center; border-bottom: 1px solid #ececec; }
.q em { padding-left: 36px; white-space: nowrap; }
.q svg { width: 20px; height: 20px; margin: 0 4px 0 -24px; }
.q p { justify-content: flex-end; padding-right: 2px; border-left: 1px solid #ececec; }
.q.k em, .q.k p { border-bottom-color: #000; }
.q.top { background: #fff; }
.q.top em { padding-left: 25px; }
.q.top p { justify-content: flex-start; padding-left: 2px; }
.q.sec { background: #f0f0f0; font-weight: bold; margin-left: 0; grid-template-columns: 234px minmax(0, 1fr); }
.q.sec em { padding-left: 6px; gap: 8px; }
.q.open p { background: #fff; }
.bold { font-weight: bold; }
.ball { width: 14px; height: 14px; margin-right: 8px; border-radius: 50%; background: radial-gradient(circle at 35% 30%, #1ba1f5, #0547a8); }
.thumb { flex: none; width: 15px; height: 106px; margin-bottom: auto; margin-top: 30px; background: #cdcdcd; }
.thumb.small { height: 17px; margin-top: 4px; }
.wide { gap: 0; }
.wide .bar { width: 1px; height: 22px; margin: 0 4px 0 9px; background: #888; }
.wide .tog { height: 25px; padding: 0 3px; background: #cce8ff; border: 1px solid #99d1ff; }
.wide .tog + .bar { margin: 0 9px 0 2px; }
.wide .arr { width: 26px; }
.wide .arr svg { width: 16px; height: 16px; }

.subtabs { display: flex; height: 20px; margin-top: 5px; }
.subtabs button { width: 66px; text-align: center; border: 1px solid #999; border-left: 0; }
.subtabs .cur { width: 128px; font-weight: bold; border-left: 1px solid #999; border-bottom: 0; text-align: left; padding-left: 4px; }
.subtabs i { flex: 1; border-bottom: 1px solid #999; }
.lower { flex: 1; display: flex; flex-direction: column; padding: 2px 3px 2px 2px; border: 1px solid #999; border-top: 0; }
.gridbox { border: 1px solid #666; }
.gridtop { display: flex; }
.w37 { width: 37px; } .w100 { width: 100px; } .w59 { width: 59px; } .w77 { width: 77px; } .w76 { width: 76px; } .w82 { width: 82px; } .w70 { width: 70px; } .w53 { width: 53px; }
.rec { flex: 1; min-width: 0; }
.rec th, .rec td { height: 17px; line-height: 14px; padding: 0 3px; text-align: right; white-space: nowrap; overflow: hidden; border-right: 1px solid #e6e6e6; border-bottom: 1px solid #e6e6e6; }
.rec th { background: #f0f0f0; text-align: center; padding: 0 1px; border-color: #999; }
.rec td:first-child { background: #f0f0f0; border-color: #999; }
.rec td:nth-child(2), .rec td:nth-child(3), .rec td:last-child, .rec th:last-child { text-align: left; }
.rec td:nth-child(2), .rec td:nth-child(3) { font-family: Roboto, "Liberation Sans", sans-serif; }
.rec td:nth-child(2) { padding: 0; }
.rec td:nth-child(3), .rec td:last-child, .rec th:last-child { padding: 0 2px; }
.rec td:nth-child(4) { text-align: center; }
.rec td:nth-child(6), .rec td:nth-child(7) { padding-right: 7px; }
.rec svg { float: left; width: 20px; height: 16px; margin-right: 2px; }
.hs { display: flex; align-items: center; height: 16px; gap: 6px; padding: 0 22px 0 4px; background: #f0f0f0; color: #505050; }
.hs svg { width: 8px; height: 8px; }
.hs i { flex: 1; height: 16px; margin-right: 28px; background: #cdcdcd; }
.opts { display: grid; grid-template-columns: 215px minmax(0, 1fr); }
.checks > div { display: flex; height: 22px; }
.checks label { display: flex; align-items: center; gap: 4px; margin-right: 12px; white-space: nowrap; }
.checks label:first-child { min-width: 65px; }
.fields > div { display: flex; }
.fields label { font-weight: bold; line-height: 16px; }
.f1 label { width: 46px; padding-top: 2px; }
.f1 input { flex: 1; min-width: 0; height: 20px; border: 1px solid #a0a0a0; }
.f1 { margin: 1px 0 3px; }
.f2 label { width: 91px; }
.combo { flex: 1; display: flex; align-items: center; height: 21px; padding-left: 5px; border: 1px solid #777; border-width: 0 1px 1px 2px; border-bottom-color: #ddd; }
.combo.tall { height: 24px; border-top-width: 2px; }
.combo svg { width: 16px; height: 20px; }
.combo select { appearance: none; flex: 1; height: 19px; padding-left: 18px; background: url("data:image/svg+xml,%3Csvg xmlns='http://www.w3.org/2000/svg' width='16' height='19'%3E%3Cpath d='M0 0h16v19H0z' fill='%23f0f0f0'/%3E%3Cpath d='M15.5 0v18.5H0' fill='none' stroke='%23555'/%3E%3Cpath d='M4 7h8l-4 5z'/%3E%3C/svg%3E") right no-repeat; }
.combo svg + select { padding-left: 2px; }
.note { display: flex; gap: 3px; margin-top: auto; height: 20px; border-top: 1px solid #eee; }
.note textarea { flex: 1; resize: none; border: 1px solid #666; display: block; }
.note .vs { width: 14px; padding: 2px 0; }

/* status bar */
.status { display: flex; align-items: center; gap: 2px; height: 21px; margin-top: 1px; background: linear-gradient(#dde9fb, #84ade8); border-top: 1px solid #b9cff3; }
.status span { display: flex; align-items: center; gap: 3px; height: 20px; padding-left: 3px; border: 1px solid; border-color: #a3a3a3 #fff #fff #a3a3a3; white-space: nowrap; }
.status svg { width: 16px; height: 16px; }
.status .u { width: 344px; padding-left: 1px; }
.status .e { width: 171px; padding-left: 1px; }
.status .caps { width: 33px; padding-left: 2px; color: #6f7f9c; }
.status .gap { width: 19px; }
.status .m { width: 75px; padding-left: 1px; }
.status .a { width: 62px; padding-left: 1px; }
.status i { width: 5px; height: 14px; border-left: 2px solid #fff; }
.status .rest { flex: 1; }

/* numbered callouts */
.notes { position: absolute; left: 0; top: 0; width: 1920px; height: 1040px; pointer-events: none; }
.shadow { filter: drop-shadow(2px 3px 3px rgba(0, 0, 0, .45)); }
.notes rect, .ra, .ba { fill: none; }
.rb { stroke: #fb0a0a; stroke-width: 2; }
.ba { stroke: #0272bd; stroke-width: 4; }
.bb { stroke: #0272bd; stroke-width: 5; }
.ra { stroke: #f00; stroke-width: 4; }
.rf { fill: #f00; }
.bf { fill: #0272bd; }
.dot { fill: #e32a2f; fill-opacity: .92; stroke: #f30d10; }
.num { fill: #ffe9e9; font: 15px "Open Sans", sans-serif; text-anchor: middle; }
```
